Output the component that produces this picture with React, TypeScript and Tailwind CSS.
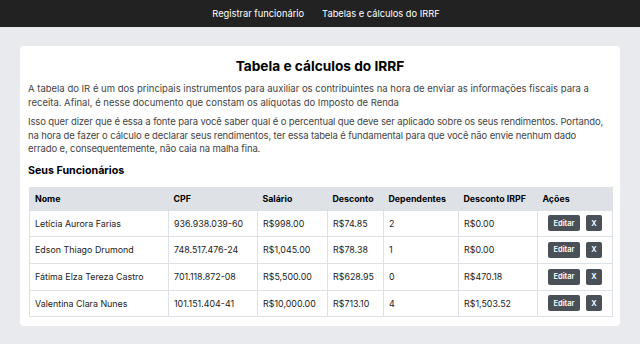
import React from "react";

type Funcionario = {
  nome: string;
  cpf: string;
  salario: string;
  desconto: string;
  dependentes: number;
  irpf: string;
};

const funcionarios: Funcionario[] = [
  { nome: "Letícia Aurora Farias", cpf: "936.938.039-60", salario: "R$998.00", desconto: "R$74.85", dependentes: 2, irpf: "R$0.00" },
  { nome: "Edson Thiago Drumond", cpf: "748.517.476-24", salario: "R$1,045.00", desconto: "R$78.38", dependentes: 1, irpf: "R$0.00" },
  { nome: "Fátima Elza Tereza Castro", cpf: "701.118.872-08", salario: "R$5,500.00", desconto: "R$628.95", dependentes: 0, irpf: "R$470.18" },
  { nome: "Valentina Clara Nunes", cpf: "101.151.404-41", salario: "R$10,000.00", desconto: "R$713.10", dependentes: 4, irpf: "R$1,503.52" },
];

const colunas = ["Nome", "CPF", "Salário", "Desconto", "Dependentes", "Desconto IRPF", "Ações"];
const larguras = ["w-[139px]", "w-[89px]", "w-[70px]", "w-[56px]", "w-[75px]", "w-[79px]", "w-[75px]"];

export default function App() {
  return (
    <div className="min-h-[344px] bg-[#e9eaee] font-['Inter','Noto_Sans',sans-serif] text-[#333]">
      {/* Barra superior */}
      <nav className="flex h-[27px] items-center justify-center gap-[18px] bg-[#222222] pl-[12px] text-[9.3px] text-white">
        <a href="#">Registrar funcionário</a>
        <a href="#">Tabelas e cálculos do IRRF</a>
      </nav>

      <main className="px-[20px] pt-[19px]">
        <div className="rounded-[4px] bg-white px-[8px] pb-[9px] pt-[10px]">
          <h1 className="text-center text-[13.7px] font-bold leading-[20px] text-black">Tabela e cálculos do IRRF</h1>

          {/* quebras de linha fixas, como no layout original */}
          <p className="mt-[6px] whitespace-nowrap text-[9.5px] leading-[13.5px] text-[#444]">
            A tabela do IR é um dos principais instrumentos para auxiliar os contribuintes na hora de enviar as
            informações fiscais para a
            <br />
            receita. Afinal, é nesse documento que constam os alíquotas do Imposto de Renda
          </p>
          <p className="mt-[6px] whitespace-nowrap text-[9.5px] leading-[13.5px] tracking-[-0.12px] text-[#444]">
            Isso quer dizer que é essa a fonte para você saber qual é o percentual que deve ser aplicado sobre os seus
            rendimentos. Portando,
            <br />
            na hora de fazer o cálculo e declarar seus rendimentos, ter essa tabela é fundamental para que você não
            envie nenhum dado
            <br />
            errado e, consequentemente, não caia na malha fina.
          </p>

          <h2 className="mt-[7px] text-[10.7px] font-bold leading-[16px] text-black">Seus Funcionários</h2>

          <table className="ml-[1px] mt-[8px] w-[583px] table-fixed border-collapse border border-[#dee2e6] text-left">
            <colgroup>
              {larguras.map((w, i) => (
                <col key={i} className={w} />
              ))}
            </colgroup>
            <thead>
              <tr className="h-[23px] bg-[#dee2e6]">
                {colunas.map((c) => (
                  <th key={c} className="px-[5px] text-[8.8px] font-bold text-black">
                    {c}
                  </th>
                ))}
              </tr>
            </thead>
            <tbody>
              {funcionarios.map((f) => (
                <tr key={f.cpf} className="h-[26.7px] text-[8.9px] text-[#222]">
                  <td className="border border-[#dee2e6] px-[5px]">{f.nome}</td>
                  <td className="border border-[#dee2e6] px-[5px]">{f.cpf}</td>
                  <td className="border border-[#dee2e6] px-[5px]">{f.salario}</td>
                  <td className="border border-[#dee2e6] px-[5px]">{f.desconto}</td>
                  <td className="border border-[#dee2e6] px-[5px]">{f.dependentes}</td>
                  <td className="border border-[#dee2e6] px-[5px]">{f.irpf}</td>
                  <td className="border border-[#dee2e6] px-[5px]">
                    <div className="flex justify-center gap-[6px]">
                      <button className="h-[16px] w-[32px] rounded-[2px] bg-[#495057] text-[7.5px] font-semibold text-white">
                        Editar
                      </button>
                      <button className="h-[16px] w-[16px] rounded-[2px] bg-[#495057] text-[7.5px] font-semibold text-white">
                        X
                      </button>
                    </div>
                  </td>
                </tr>
              ))}
            </tbody>
          </table>
        </div>
      </main>
    </div>
  );
}
